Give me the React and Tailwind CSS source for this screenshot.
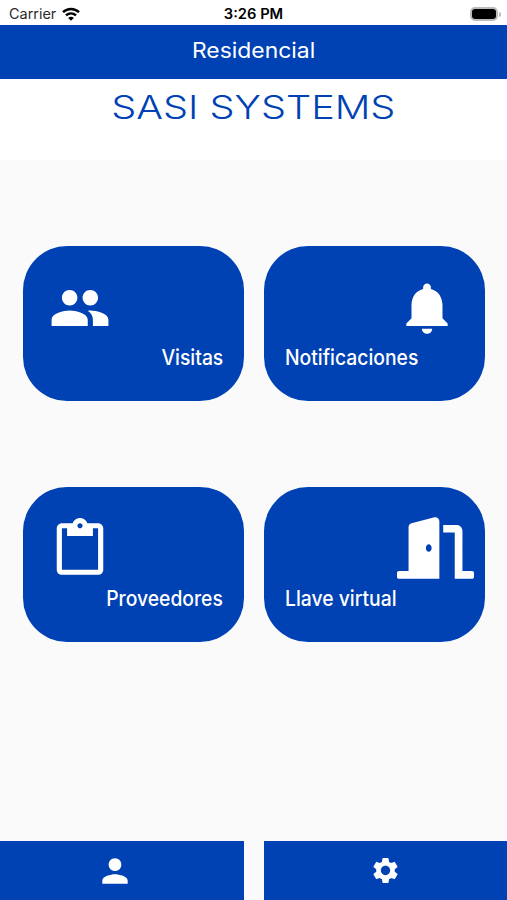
import React from "react";
import { FaDoorOpen } from "react-icons/fa";
import {
  MdPeople,
  MdNotifications,
  MdContentPaste,
  MdPerson,
  MdSettings,
} from "react-icons/md";

const StatusBar = () => {
  return (
    <div className="grid h-[25px] grid-cols-3 items-center bg-white pt-[3px] text-[14px] leading-none text-black">
      <div className="flex items-center gap-[6px] pl-[9px]">
        <span className="origin-left scale-x-[1.03] text-[#2a2a2a]">Carrier</span>
        <svg viewBox="0 0 18 14" className="ml-px h-[14px] w-[18px]">
          <g fill="none" stroke="#000" strokeWidth="2.5">
            <path d="M1 5.2C5.5.9 12.500.9 17 5.200" />
            <path d="M4 8.400C6.900 5.700 11.100 5.700 14 8.400" />
          </g>
          <path d="M9 13.700L6.200 10.900C7.700 9.400 10.300 9.400 11.800 10.900Z" />
        </svg>
      </div>
      <span className="scale-x-[1.05] text-center font-semibold">3:26 PM</span>
      <div className="flex items-center justify-end gap-px pr-[6px]">
        <div className="h-[14px] w-[28px] rounded-[5px] border-2 border-[#bcbcbc]">
          <div className="h-full w-full rounded-[3px] bg-black" />
        </div>
        <div className="h-[5px] w-[2px] rounded-r-full bg-[#bcbcbc]" />
      </div>
    </div>
  );
};

const Card = ({ icon, label, side }) => {
  const left = side === "left";
  return (
    <button
      className={`flex h-[155px] flex-col rounded-[44px] bg-[#0042b4] text-white ${
        left ? "items-end pr-[21px]" : "items-start pl-[21px]"
      }`}
    >
      <div className="flex h-[98px] w-full items-end">{icon}</div>
      <span
        className={`inline-block text-[21px] leading-[28px] font-medium whitespace-nowrap ${
          left ? "origin-right scale-x-[0.92]" : "origin-left scale-x-[0.92]"
        }`}
      >
        {label}
      </span>
    </button>
  );
};

const App = () => {
  return (
    <div className="flex h-[900px] w-[507px] flex-col overflow-hidden bg-[#fafafa] font-['Inter','Liberation_Sans',sans-serif]">
      <StatusBar />
      <header className="flex h-[54px] items-start justify-center bg-[#0042b4] pt-[11px]">
        <h1 className="scale-x-[1.09] text-[21px] leading-[30px] font-normal text-white">
          Residencial
        </h1>
      </header>
      <div className="flex h-[81px] items-start justify-center bg-white pt-[8px]">
        <h2 className="scale-x-[1.2] text-[33px] leading-[40px] font-light whitespace-nowrap text-[#0042b4]">
          SASI SYSTEMS
        </h2>
      </div>

      <main className="grid grow grid-cols-[221px_221px] content-start gap-x-[20px] gap-y-[86px] pt-[86px] pl-[23px]">
        <Card
          side="left"
          label="Visitas"
          icon={<MdPeople className="mb-[5px] ml-[26px] h-[62px] w-[62px]" />}
        />
        <Card
          side="right"
          label="Notificaciones"
          icon={<MdNotifications className="mb-[5px] ml-[111px] h-[62px] w-[62px]" />}
        />
        <Card
          side="left"
          label="Proveedores"
          icon={<MdContentPaste className="mb-[5px] ml-[26px] h-[62px] w-[62px]" />}
        />
        <Card
          side="right"
          label="Llave virtual"
          icon={<FaDoorOpen className="mb-[6px] ml-[112px] h-[62px] w-[77px] shrink-0" />}
        />
      </main>

      <nav className="flex h-[59px] gap-[20px] text-white">
        <button className="flex w-[244px] items-center bg-[#0042b4]">
          <MdPerson className="ml-[96px] h-[38px] w-[38px]" />
        </button>
        <button className="flex grow items-center justify-center bg-[#0042b4]">
          <MdSettings className="h-[31px] w-[31px]" />
        </button>
      </nav>
    </div>
  );
};

export default App;
